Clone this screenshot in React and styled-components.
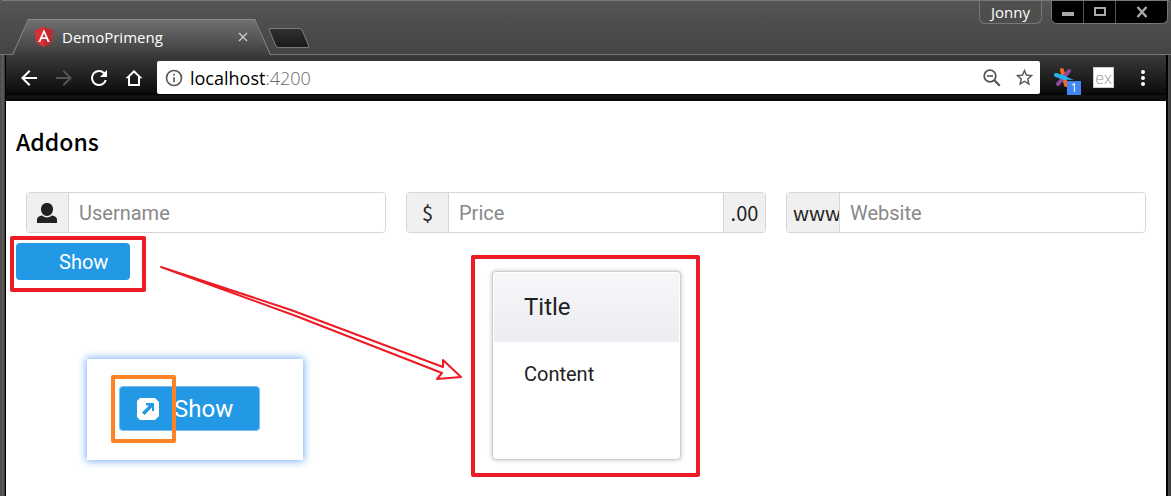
import React from "react";
import styled, { createGlobalStyle } from "styled-components";

const GlobalStyle = createGlobalStyle`
  * { box-sizing: border-box; }
  body { margin: 0; font-family: Roboto, sans-serif; }
  button, input { font: inherit; margin: 0; }
`;

const light = `"Open Sans", "Noto Sans", sans-serif`;
const system = `"Noto Sans CJK SC", "Noto Sans", sans-serif`;
const red = "#ed1c24";

const Window = styled.div`
  min-height: 100vh;
  display: flex;
  flex-direction: column;
  padding: 0 3px 0 5px;
  background: linear-gradient(90deg, #4a4a4a, #5e5e5e 3px, #333 5px, #333 calc(100% - 4px), #4c4a48 calc(100% - 3px), #3a3836);
`;

const TitleBar = styled.header`
  height: 55px;
  margin: 0 -3px 0 -5px;
  padding: 0 3px 0 20px;
  display: flex;
  justify-content: space-between;
  border-top: 1px solid #7a7a7a;
  border-bottom: 1px solid #777;
  border-radius: 4px 4px 0 0;
  background: linear-gradient(#555, #444);
`;

const TabStrip = styled.div`
  display: flex;
  align-items: flex-end;
`;

const Tab = styled.div`
  position: relative;
  isolation: isolate;
  width: 243px;
  height: 36px;
  margin-bottom: -1px;
  padding: 0 12px 0 14px;
  display: flex;
  align-items: center;
  gap: 8px;
  color: #fff;
  font: 400 15px/20px ${light};

  &::before, &::after {
    content: "";
    position: absolute;
    z-index: -1;
    top: 0;
    bottom: 0;
    border-top: 1px solid #8a8a8a;
    background: linear-gradient(#707070, #3d3d3d);
  }
  &::before {
    left: 0;
    right: 40%;
    border-left: 1px solid #8a8a8a;
    transform: skewX(-24deg);
  }
  &::after {
    left: 40%;
    right: 0;
    border-right: 1px solid #8a8a8a;
    transform: skewX(24deg);
  }
`;

const TabTitle = styled.span`flex: 1;`;

const IconButton = styled.button`
  width: ${(p) => p.$size || 24}px;
  height: ${(p) => p.$size || 24}px;
  flex: none;
  padding: 0;
  border: 0;
  display: grid;
  place-items: center;
  background: none;
  color: ${(p) => p.$color || "#fff"};
  svg { display: block; }
`;

const NewTab = styled.button`
  width: 34px;
  height: 20px;
  margin: 0 0 6px 9px;
  padding: 0;
  border: 1px solid #7a7a7a;
  border-radius: 3px;
  background: linear-gradient(#303030, #1a1a1a);
  transform: skewX(23deg);
`;

const WindowControls = styled.div`
  display: flex;
  gap: 9px;
  height: 23px;
`;

const Profile = styled.button`
  width: 63px;
  padding: 0;
  border: 1px solid #777;
  border-top: 0;
  border-radius: 0 0 6px 6px;
  background: #4e4e4e;
  color: #fff;
  font: 400 15px/20px ${light};
`;

const ControlGroup = styled.div`
  display: flex;
  border: 1px solid #777;
  border-top: 0;
  border-radius: 0 0 6px 6px;
  overflow: hidden;
  background: #000;
`;

const Control = styled.button`
  width: ${(p) => (p.$wide ? 51 : 32)}px;
  padding: 0;
  border: 0;
  border-right: ${(p) => (p.$wide ? 0 : "1px solid #555")};
  display: grid;
  place-items: center;
  background: #000;
  color: #aaa;
  svg { display: block; }
`;

const Toolbar = styled.nav`
  height: 46px;
  padding: 6px 11px 7px 11px;
  display: flex;
  align-items: center;
  border-left: 1px solid #000;
  border-right: 2px solid #000;
  background: linear-gradient(#3a3a3a, #0c0c0c 38px, #000 39px, #141414 41px, #080808);
`;

const NavButtons = styled.div`
  display: flex;
  gap: 11px;
  margin-right: 11px;
`;

const Omnibox = styled.div`
  flex: 1;
  height: 33px;
  padding: 0 4px 0 5px;
  display: flex;
  align-items: center;
  gap: 4px;
  border-radius: 2px;
  background: #fff;
  color: #000;
  font: 400 18px/24px ${light};
`;

const Address = styled.span`
  flex: 1;
  font-weight: 300;
`;

const Host = styled.span`font-weight: 400;`;
const Port = styled.span`color: #666;`;
const OmniActions = styled.div`display: flex; gap: 8px;`;

const Extensions = styled.div`
  display: flex;
  align-items: center;
  gap: 17px;
  margin-left: 12px;
`;

const Extension = styled.button`
  position: relative;
  width: 24px;
  height: 24px;
  padding: 0;
  border: 0;
  background: none;
  svg { display: block; }
`;

const Badge = styled.span`
  position: absolute;
  right: -5px;
  bottom: -5px;
  width: 14px;
  height: 14px;
  background: #4285f4;
  color: #fff;
  font: 400 12px/14px ${light};
  text-align: center;
`;

const TextExtension = styled.button`
  width: 21px;
  height: 21px;
  padding: 0;
  border: 1px solid #ccc;
  background: #fff;
  color: #999;
  font: 300 16px/16px ${light};
`;

const Page = styled.main`
  position: relative;
  flex: 1;
  min-height: 395px;
  padding: 24px 10px 10px;
  border-left: 1px solid #000;
  border-right: 2px solid #000;
  background: #fff;
  color: #222;
`;

const Heading = styled.h3`
  margin: 0 0 35px;
  color: #000;
  font: 500 23px/32px ${system};
`;

const Fields = styled.div`
  display: grid;
  grid-template-columns: repeat(3, minmax(0, 1fr));
  gap: 20px;
  padding: 0 10px;
`;

const InputGroup = styled.label`
  display: flex;
  height: 41px;
  border: 1px solid #d6d6d6;
  border-radius: 4px;
  overflow: hidden;
  font-size: 20px;
`;

const Addon = styled.span`
  flex: none;
  width: ${(p) => (p.$wide ? 52 : 41)}px;
  padding-left: ${(p) => (p.$wide ? 6 : 0)}px;
  display: flex;
  align-items: center;
  justify-content: ${(p) => (p.$wide ? "flex-start" : "center")};
  background: #f0f0f0;
  font: 400 20px/28px ${system};
`;

const TextInput = styled.input`
  flex: 1;
  min-width: 0;
  position: relative;
  padding: 0 10px;
  border: 0;
  border-left: 1px solid #d6d6d6;
  border-right: ${(p) => (p.$between ? "1px solid #d6d6d6" : 0)};
  outline: 0;
  background: #fff;
  color: #222;
  &::placeholder { color: #888; opacity: 1; }
`;

const ShowButton = styled.button`
  width: ${(p) => (p.$large ? 141 : 114)}px;
  height: ${(p) => (p.$large ? 45 : 37)}px;
  margin-top: ${(p) => (p.$large ? 0 : 10)}px;
  padding: 0 0 0 ${(p) => (p.$large ? 17 : 43)}px;
  display: flex;
  align-items: center;
  gap: 15px;
  border: ${(p) => (p.$large ? "1px solid #78bdf0" : 0)};
  border-radius: 4px;
  background: #2399e5;
  color: #fff;
  font-size: ${(p) => (p.$large ? 24 : 20)}px;
`;

const Dialog = styled.section`
  position: absolute;
  top: 170px;
  left: 50%;
  width: 189px;
  height: 189px;
  margin-left: -94px;
  padding: 1px;
  border: 1px solid #cfcfcf;
  border-radius: 4px;
  background: #fff;
  box-shadow: 0 0 4px rgba(0, 0, 0, 0.25);
`;

const DialogTitle = styled.h2`
  margin: 0;
  padding: 18px 30px 19px;
  background: linear-gradient(#f6f7f9, #ebedf0);
  font: 400 24px/32px Roboto, sans-serif;
`;

const DialogBody = styled.p`
  margin: 0;
  padding: 20px 30px;
  font-size: 20px;
  line-height: 24px;
`;

const Highlight = styled.div`
  position: absolute;
  left: ${(p) => p.$x}px;
  top: ${(p) => p.$y}px;
  width: ${(p) => p.$w}px;
  height: ${(p) => p.$h}px;
  border: 4px solid ${(p) => p.$color || red};
  border-radius: 2px;
  pointer-events: none;
`;

const DialogHighlight = styled(Highlight)`
  left: 50%;
  margin-left: -115px;
`;

const Arrow = styled.svg`
  position: absolute;
  left: 150px;
  top: 160px;
  pointer-events: none;
`;

const Inset = styled.aside`
  position: absolute;
  left: 81px;
  top: 258px;
  width: 216px;
  height: 101px;
  padding: 27px 32px;
  background: #fff;
  box-shadow: 0 0 8px 1px #76aef8;
`;

const Icon = ({ d, size = 24 }) => (
  <svg width={size} height={size} viewBox="0 0 24 24" fill="currentColor" aria-hidden="true">
    <path d={d} />
  </svg>
);

const icons = {
  back: "M20 11H7.83l5.59-5.59L12 4l-8 8 8 8 1.41-1.41L7.83 13H20z",
  forward: "M12 4l-1.41 1.41L16.17 11H4v2h12.17l-5.58 5.59L12 20l8-8z",
  reload:
    "M17.65 6.35A7.96 7.96 0 0 0 12 4a8 8 0 1 0 7.73 10h-2.08A6 6 0 1 1 12 6c1.66 0 3.14.69 4.22 1.78L13 11h7V4z",
  home: "M12 4L3.5 12.2H6V20h12v-7.8h2.5zM12 6.7l4 3.9V18H8v-7.4z",
  info: "M11 7h2v2h-2zm0 4h2v6h-2zm1-9a10 10 0 1 0 0 20 10 10 0 0 0 0-20zm0 18a8 8 0 1 1 0-16 8 8 0 0 1 0 16z",
  zoomOut:
    "M15.5 14h-.79l-.28-.27A6.5 6.5 0 1 0 13.73 14.43l.27.28v.79l5 4.99L20.49 19zm-6 0a4.500 4.500 0 1 1 0-9 4.500 4.500 0 0 1 0 9zM7 9h5v1H7z",
  star:
    "M22 9.24l-7.19-.62L12 2 9.19 8.63 2 9.24l5.46 4.73L5.82 21 12 17.27 18.18 21l-1.63-7.03zM12 15.4l-3.76 2.27 1-4.28-3.32-2.88 4.38-.38L12 6.1l1.71 4.04 4.38.38-3.32 2.88 1 4.28z",
  menu: "M12 8a2 2 0 1 0 0-4 2 2 0 0 0 0 4zm0 2a2 2 0 1 0 0 4 2 2 0 0 0 0-4zm0 6a2 2 0 1 0 0 4 2 2 0 0 0 0-4z",
};

const AngularLogo = () => (
  <svg width="20" height="20" viewBox="0 0 20 20" aria-hidden="true">
    <path d="M10 0l9.2 3.3-1.4 12.2L10 20l-7.8-4.5L.8 3.3z" fill="#dd3036" />
    <path d="M10 0l9.2 3.3-1.4 12.2L10 20z" fill="#bd2930" />
    <path d="M10 2.2L4.3 15h2.1l1.2-2.9h4.8l1.2 2.9h2.1zm0 4l1.7 4.1H8.3z" fill="#fff" />
  </svg>
);

export default function App() {
  return (
    <Window>
      <GlobalStyle />
      <TitleBar>
        <TabStrip>
          <Tab>
            <AngularLogo />
            <TabTitle>DemoPrimeng</TabTitle>
            <IconButton $size={16} $color="#c4c4c4" aria-label="Close tab">
              <svg width="10" height="10" viewBox="0 0 10 10" stroke="currentColor" strokeWidth="1.6">
                <path d="M1 1l8 8M9 1L1 9" />
              </svg>
            </IconButton>
          </Tab>
          <NewTab aria-label="New tab" />
        </TabStrip>
        <WindowControls>
          <Profile>Jonny</Profile>
          <ControlGroup>
            <Control aria-label="Minimize">
              <svg width="14" height="12"><path d="M1 6h12v4H1z" fill="#aaa" /></svg>
            </Control>
            <Control aria-label="Maximize">
              <svg width="14" height="12"><path d="M2 2h10v7H2z" fill="none" stroke="#aaa" strokeWidth="2" /></svg>
            </Control>
            <Control $wide aria-label="Close">
              <svg width="12" height="12" fill="none" stroke="#aaa" strokeWidth="2.4">
                <path d="M1.500 1l9 10M10.500 1l-9 10" />
              </svg>
            </Control>
          </ControlGroup>
        </WindowControls>
      </TitleBar>

      <Toolbar>
        <NavButtons>
          <IconButton aria-label="Back"><Icon d={icons.back} /></IconButton>
          <IconButton $color="#555" aria-label="Forward"><Icon d={icons.forward} /></IconButton>
          <IconButton aria-label="Reload"><Icon d={icons.reload} /></IconButton>
          <IconButton aria-label="Home"><Icon d={icons.home} /></IconButton>
        </NavButtons>
        <Omnibox>
          <IconButton $color="#5a5a5a" aria-label="Site information"><Icon d={icons.info} size={20} /></IconButton>
          <Address><Host>localhost</Host><Port>:4200</Port></Address>
          <OmniActions>
            <IconButton $color="#555" aria-label="Zoom out">
              <svg width="18" height="18" viewBox="0 0 18 18" fill="none" stroke="currentColor" aria-hidden="true">
                <circle cx="7" cy="7" r="5.800" strokeWidth="1.800" />
                <path d="M4 7h6" strokeWidth="1.600" />
                <path d="M11.300 11.300l5.500 5.500" strokeWidth="2.200" />
              </svg>
            </IconButton>
            <IconButton $color="#555" aria-label="Bookmark"><Icon d={icons.star} size={21} /></IconButton>
          </OmniActions>
        </Omnibox>
        <Extensions>
          <Extension aria-label="Notifications, 1">
            <svg width="24" height="24" viewBox="0 0 24 24" strokeLinecap="round" strokeWidth="4" fill="none">
              <path d="M10 4l4 15" stroke="#f26a21" />
              <path d="M17 5L6 18" stroke="#8e4ba0" />
              <path d="M4 9l9 3" stroke="#29b2ea" />
              <path d="M11 9.500l11 4.500-11-.500z" fill="#29b2ea" />
            </svg>
            <Badge>1</Badge>
          </Extension>
          <TextExtension>ex</TextExtension>
          <IconButton aria-label="Menu"><Icon d={icons.menu} /></IconButton>
        </Extensions>
      </Toolbar>

      <Page>
        <Heading>Addons</Heading>
        <Fields>
          <InputGroup>
            <Addon>
              <svg width="21" height="20" viewBox="0 0 21 20" fill="#222" role="img" aria-label="User">
                <path d="M10 0c3.600 0 6 2.600 6 6 0 4-2.500 7-6 7S4 10 4 6c0-3.400 2.400-6 6-6z" />
                <path d="M5 12.500c3 2.600 7 2.600 10 0 3 .700 5 1.700 5 4V20H0v-3.500c0-2.300 2-3.300 5-4z" />
              </svg>
            </Addon>
            <TextInput placeholder="Username" />
          </InputGroup>
          <InputGroup>
            <Addon>$</Addon>
            <TextInput placeholder="Price" $between />
            <Addon>.00</Addon>
          </InputGroup>
          <InputGroup>
            <Addon $wide>www</Addon>
            <TextInput placeholder="Website" />
          </InputGroup>
        </Fields>
        <ShowButton>Show</ShowButton>

        <Dialog role="dialog" aria-labelledby="dialog-title">
          <DialogTitle id="dialog-title">Title</DialogTitle>
          <DialogBody>Content</DialogBody>
        </Dialog>

        <Inset>
          <ShowButton $large>
            <svg width="22" height="22" viewBox="0 0 22 22" aria-hidden="true">
              <path d="M3 0h15l4 4v14l-4 4H3l-3-3V3z" fill="#fff" />
              <path d="M9 5h8v8h-2v-3.500L7.500 17 5 14.500 12 7.500H9z" fill="#2399e5" />
            </svg>
            Show
          </ShowButton>
        </Inset>

        <Highlight $x={4} $y={135} $w={136} $h={56} />
        <Highlight $x={105} $y={274} $w={65} $h={68} $color="#ff8227" />
        <DialogHighlight $y={154} $w={229} $h={222} />
        <Arrow width="320" height="130" viewBox="0 0 320 130" fill="none" stroke={red} strokeWidth="2" strokeLinejoin="round" aria-hidden="true">
          <path d="M5 6L135 49l152 57v-7l18 17-24 2 5-6L140 55z" />
        </Arrow>
      </Page>
    </Window>
  );
}
